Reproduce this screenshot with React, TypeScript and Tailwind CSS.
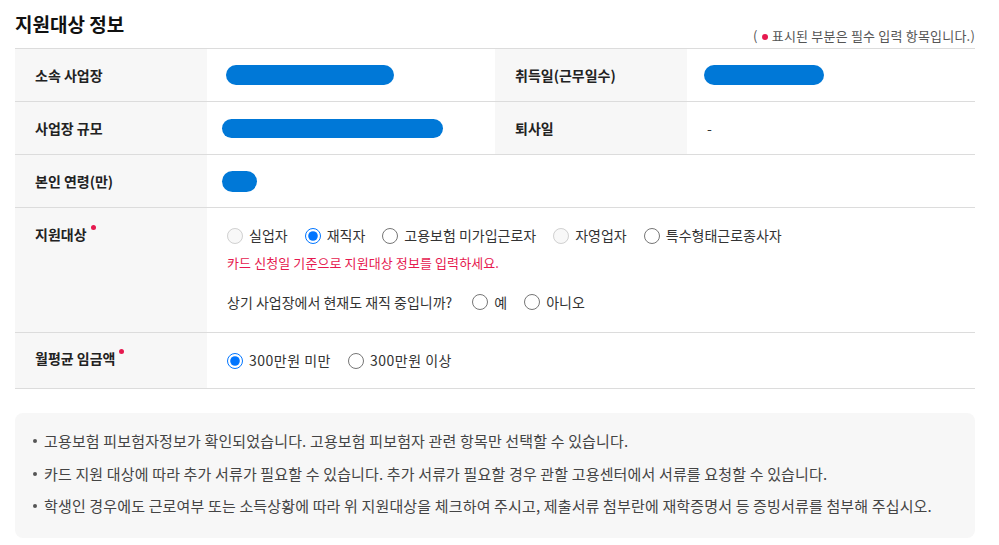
import React from "react";

const font = { fontFamily: '"Noto Sans CJK KR", "Noto Sans", sans-serif' };

function Dot() {
  return <span className="absolute -right-[9px] top-[1px] h-[5px] w-[5px] rounded-full bg-[#e6194f]" />;
}

function Radio({ label, checked, disabled, name, wide }: { label: string; checked?: boolean; disabled?: boolean; name: string; wide?: boolean }) {
  return (
    <label className="flex items-center gap-[6px] text-[14px] text-[#333]">
      <input
        type="radio"
        name={name}
        defaultChecked={checked}
        disabled={disabled}
        className="m-0 h-[16px] w-[16px] accent-[#0075ff]"
      />
      <span className={wide ? "tracking-[0.5px]" : ""}>{label}</span>
    </label>
  );
}

export default function App() {
  return (
    <div className="w-[999px] h-[545px] bg-white pl-[15px] pr-[24px] pt-[10px]" style={font}>
      <div className="flex h-[38px] items-end justify-between">
        <h2 className="self-start text-[19px] font-bold leading-[28px] text-[#111]">지원대상 정보</h2>
        <p className="mb-[3px] text-[13px] leading-[18px] tracking-[0.2px] text-[#555]">
          ( <span className="mx-[1px] inline-block h-[6px] w-[6px] rounded-full bg-[#e6194f] align-middle" /> 표시된 부분은 필수 입력 항목입니다.)
        </p>
      </div>

      <div className="border-t border-[#dcdcdc] text-[14px]">
        <div className="grid h-[53px] grid-cols-[192px_288px_192px_288px] border-b border-[#dcdcdc]">
          <div className="flex items-center bg-[#f7f7f7] pl-[20px] font-bold text-[#222]">소속 사업장</div>
          <div className="flex items-center pl-[19px]">
            <div className="h-[20px] w-[168px] rounded-full bg-[#0078d7]" />
          </div>
          <div className="flex items-center bg-[#f7f7f7] pl-[20px] font-bold text-[#222]">취득일(근무일수)</div>
          <div className="flex items-center pl-[17px]">
            <div className="h-[20px] w-[120px] rounded-full bg-[#0078d7]" />
          </div>
        </div>
        <div className="grid h-[53px] grid-cols-[192px_288px_192px_288px] border-b border-[#dcdcdc]">
          <div className="flex items-center bg-[#f7f7f7] pl-[20px] font-bold text-[#222]">사업장 규모</div>
          <div className="flex items-center pl-[15px]">
            <div className="h-[19px] w-[221px] rounded-full bg-[#0078d7]" />
          </div>
          <div className="flex items-center bg-[#f7f7f7] pl-[20px] font-bold text-[#222]">퇴사일</div>
          <div className="flex items-center pl-[20px] text-[#333]">-</div>
        </div>
        <div className="grid h-[53px] grid-cols-[192px_768px] border-b border-[#dcdcdc]">
          <div className="flex items-center bg-[#f7f7f7] pl-[20px] font-bold text-[#222]">본인 연령(만)</div>
          <div className="flex items-center pl-[15px]">
            <div className="h-[21px] w-[35px] rounded-full bg-[#0078d7]" />
          </div>
        </div>
        <div className="grid h-[125px] grid-cols-[192px_768px] border-b border-[#dcdcdc]">
          <div className="bg-[#f7f7f7] pl-[20px] pt-[16px] font-bold text-[#222]">
            <span className="relative">
              지원대상
              <Dot />
            </span>
          </div>
          <div className="pl-[20px] pt-[17px]">
            <div className="flex items-center gap-[17px]">
              <Radio name="t" label="실업자" disabled />
              <Radio name="t" label="재직자" checked />
              <Radio name="t" label="고용보험 미가입근로자" />
              <Radio name="t" label="자영업자" disabled />
              <Radio name="t" label="특수형태근로종사자" />
            </div>
            <p className="mt-[7px] text-[13px] tracking-[0.1px] text-[#e6194f]">카드 신청일 기준으로 지원대상 정보를 입력하세요.</p>
            <div className="mt-[19px] flex items-center gap-[20px]">
              <span className="text-[14px] text-[#333]">상기 사업장에서 현재도 재직 중입니까?</span>
              <div className="flex items-center gap-[17px]">
                <Radio name="w" label="예" />
                <Radio name="w" label="아니오" />
              </div>
            </div>
          </div>
        </div>
        <div className="grid h-[56px] grid-cols-[192px_768px] border-b border-[#dcdcdc]">
          <div className="bg-[#f7f7f7] pl-[20px] pt-[15px] font-bold text-[#222]">
            <span className="relative">
              월평균 임금액
              <Dot />
            </span>
          </div>
          <div className="flex items-center gap-[17px] pl-[20px]">
            <Radio name="p" label="300만원 미만" checked wide />
            <Radio name="p" label="300만원 이상" wide />
          </div>
        </div>
      </div>

      <ul className="mt-[24px] rounded-[8px] bg-[#f7f7f7] pb-[15px] pl-[18px] pt-[12px] text-[15px] leading-[32.5px] tracking-[0.15px] text-[#444]">
        {[
          "고용보험 피보험자정보가 확인되었습니다. 고용보험 피보험자 관련 항목만 선택할 수 있습니다.",
          "카드 지원 대상에 따라 추가 서류가 필요할 수 있습니다. 추가 서류가 필요할 경우 관할 고용센터에서 서류를 요청할 수 있습니다.",
          "학생인 경우에도 근로여부 또는 소득상황에 따라 위 지원대상을 체크하여 주시고, 제출서류 첨부란에 재학증명서 등 증빙서류를 첨부해 주십시오.",
        ].map((t) => (
          <li key={t} className="flex items-center gap-[7px]">
            <span className="h-[4px] w-[4px] rounded-full bg-[#555]" />
            <span>{t}</span>
          </li>
        ))}
      </ul>
    </div>
  );
}
